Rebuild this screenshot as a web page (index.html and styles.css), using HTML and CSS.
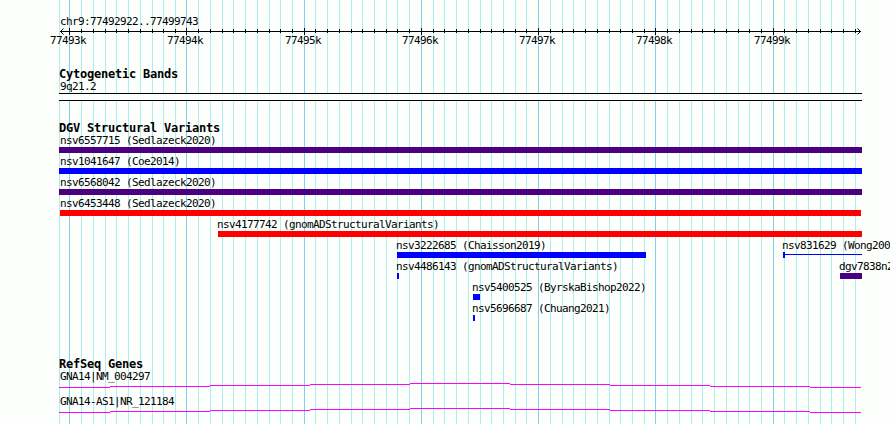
FILE: index.html
```html
<!DOCTYPE html>
<html lang="en">
<head>
  <meta charset="UTF-8">
  <meta name="viewport" content="width=device-width, initial-scale=1.0">
  <title>chr9:77492922..77499743</title>
  <link rel="stylesheet" href="styles.css">
</head>
<body>
  <div class="browser">
    <svg class="gridlines" width="890" height="424" aria-hidden="true">
      <path class="minor" id="minorLines"/>
      <path class="major" id="majorLines"/>
    </svg>

    <div class="ruler">
      <div class="label">chr9:77492922..77499743</div>
      <svg class="scale" width="803" height="19">
        <path class="axis" d="M1 3.5h801"/>
        <path class="axis" id="minorTicks"/>
        <path class="axis" id="majorTicks"/>
        <path class="arrow" d="M4.5 0.5l-3 3l3 3M798.5 0.5l3 3l-3 3"/>
        <text x="-9" y="16">77493k</text>
        <text x="108" y="16">77494k</text>
        <text x="226" y="16">77495k</text>
        <text x="343" y="16">77496k</text>
        <text x="460" y="16">77497k</text>
        <text x="577" y="16">77498k</text>
        <text x="695" y="16">77499k</text>
      </svg>
    </div>

    <div class="track cyto">
      <h2>Cytogenetic Bands</h2>
      <div class="label">9q21.2</div>
      <div class="band"></div>
    </div>

    <div class="track variants">
      <h2>DGV Structural Variants</h2>
      <div class="row">
        <div class="feature full" style="--start: 0px; --len: 803px"><span class="label">nsv6557715 (Sedlazeck2020)</span><div class="bar complex"></div></div>
      </div>
      <div class="row">
        <div class="feature full" style="--start: 0px; --len: 803px"><span class="label">nsv1041647 (Coe2014)</span><div class="bar gain"></div></div>
      </div>
      <div class="row">
        <div class="feature full" style="--start: 0px; --len: 803px"><span class="label">nsv6568042 (Sedlazeck2020)</span><div class="bar complex"></div></div>
      </div>
      <div class="row">
        <div class="feature edge" style="--start: 1px; --len: 801px"><span class="label">nsv6453448 (Sedlazeck2020)</span><div class="bar loss"></div></div>
      </div>
      <div class="row">
        <div class="feature" style="--start: 159px; --len: 644px"><span class="label">nsv4177742 (gnomADStructuralVariants)</span><div class="bar loss"></div></div>
      </div>
      <div class="row">
        <div class="feature" style="--start: 338px; --len: 249px"><span class="label">nsv3222685 (Chaisson2019)</span><div class="bar gain"></div></div>
        <div class="feature" style="--start: 724px; --len: 79px"><span class="label">nsv831629 (Wong2007b)</span><div class="bar range"></div></div>
      </div>
      <div class="row">
        <div class="feature" style="--start: 338px; --len: 2px"><span class="label">nsv4486143 (gnomADStructuralVariants)</span><div class="bar gain"></div></div>
        <div class="feature" style="--start: 781px; --len: 22px"><span class="label">dgv7838n2</span><div class="bar complex"></div></div>
      </div>
      <div class="row">
        <div class="feature" style="--start: 414px; --len: 7px"><span class="label">nsv5400525 (ByrskaBishop2022)</span><div class="bar gain"></div></div>
      </div>
      <div class="row">
        <div class="feature" style="--start: 414px; --len: 2px"><span class="label">nsv5696687 (Chuang2021)</span><div class="bar gain"></div></div>
      </div>
    </div>

    <div class="track genes">
      <h2>RefSeq Genes</h2>
      <div class="gene">
        <div class="label">GNA14|NM_004297</div>
        <svg class="intron" width="803" height="5">
          <path d="M0 4.5h51M51 3.5h100M151 2.5h100M251 1.5h100M351 .5h100M451 1.5h100M551 2.5h100M651 3.5h100M751 4.5h51"/>
        </svg>
      </div>
      <div class="gene">
        <div class="label">GNA14-AS1|NR_121184</div>
        <svg class="intron" width="803" height="5">
          <path d="M0 4.5h51M51 3.5h100M151 2.5h100M251 1.5h100M351 .5h100M451 1.5h100M551 2.5h100M651 3.5h100M751 4.5h51"/>
        </svg>
      </div>
    </div>
  </div>

  <script src="grid.js"></script>
</body>
</html>
```
FILE: styles.css
```css
* {
  margin: 0;
  padding: 0;
  box-sizing: border-box;
}

body {
  background-color: #fdfffc;
  color: #000;
  font-family: "DejaVu Sans Mono", monospace;
  font-size: 11px;
  line-height: 13px;
  letter-spacing: -0.62px;
  overflow: hidden;
}

.browser {
  position: relative;
  width: 890px;
  height: 424px;
  padding: 15px 0 0 59px;
  overflow: hidden;
}

svg {
  display: block;
  overflow: visible;
}

/* vertical guides behind all tracks */
.gridlines {
  position: absolute;
  top: 0;
  left: 0;
  z-index: -1;
}

.gridlines path,
.axis,
.intron path {
  fill: none;
  stroke-width: 1;
  shape-rendering: crispEdges;
}

.minor {
  stroke: #afeeee;
}

.major {
  stroke: #87ceeb;
}

.axis,
.arrow {
  stroke: #000;
}

.arrow {
  fill: none;
}

h2 {
  height: 13px;
  font-size: 12px;
  line-height: 14px;
  font-weight: bold;
  letter-spacing: -0.22px;
}

.label {
  display: block;
  height: 13px;
  padding-left: 1px;
  white-space: nowrap;
}

.cyto {
  margin-top: 20px;
}

.band {
  width: 803px;
  height: 8px;
  border-top: 1px solid #000;
  border-bottom: 1px solid #000;
  background-color: #fdfffc;
}

.variants {
  margin-top: 20px;
}

.row {
  display: grid;
  height: 21px;
}

.feature {
  grid-area: 1 / 1;
  width: var(--len);
  margin-left: var(--start);
}

.feature .label {
  padding-left: 0;
  margin-left: -1px;
}

.feature.full .label {
  margin-left: 1px;
}

.feature.edge .label {
  margin-left: 0;
}

.bar {
  height: 6px;
}

.complex {
  background-color: #4b0082;
}

.gain {
  background-color: #00f;
}

.loss {
  background-color: #f00;
}

.range {
  border-left: 2px solid #00f;
  background: linear-gradient(#00f, #00f) 0 2px / 100% 1px no-repeat;
}

.genes {
  margin-top: 34px;
}

.gene {
  height: 25px;
}

.intron path {
  stroke: #f0f;
}
```
FILE: grid.js
```javascript
// guide positions in pixels, one every 100 bp
const minor = [
  59, 81, 93, 105, 116, 128, 140, 152, 163, 175,
  198, 210, 222, 233, 245, 257, 269, 280, 292,
  315, 327, 339, 351, 362, 374, 386, 397, 409,
  433, 444, 456, 468, 480, 491, 503, 515, 526,
  550, 562, 573, 585, 597, 609, 620, 632, 644,
  667, 679, 691, 702, 714, 726, 738, 749, 761,
  784, 796, 808, 820, 831, 843, 855
];
const major = [69, 186, 304, 421, 538, 655, 773];
const left = 59;

function draw(id, xs, offset, top, height) {
  const d = xs.map(x => `M${x - offset + 0.5} ${top}v${height}`).join('');
  document.getElementById(id).setAttribute('d', d);
}

draw('minorLines', minor, 0, 0, 424);
draw('majorLines', major, 0, 0, 424);
draw('minorTicks', minor.slice(1), left, 1, 4);
draw('majorTicks', major, left, 0, 7);
```
